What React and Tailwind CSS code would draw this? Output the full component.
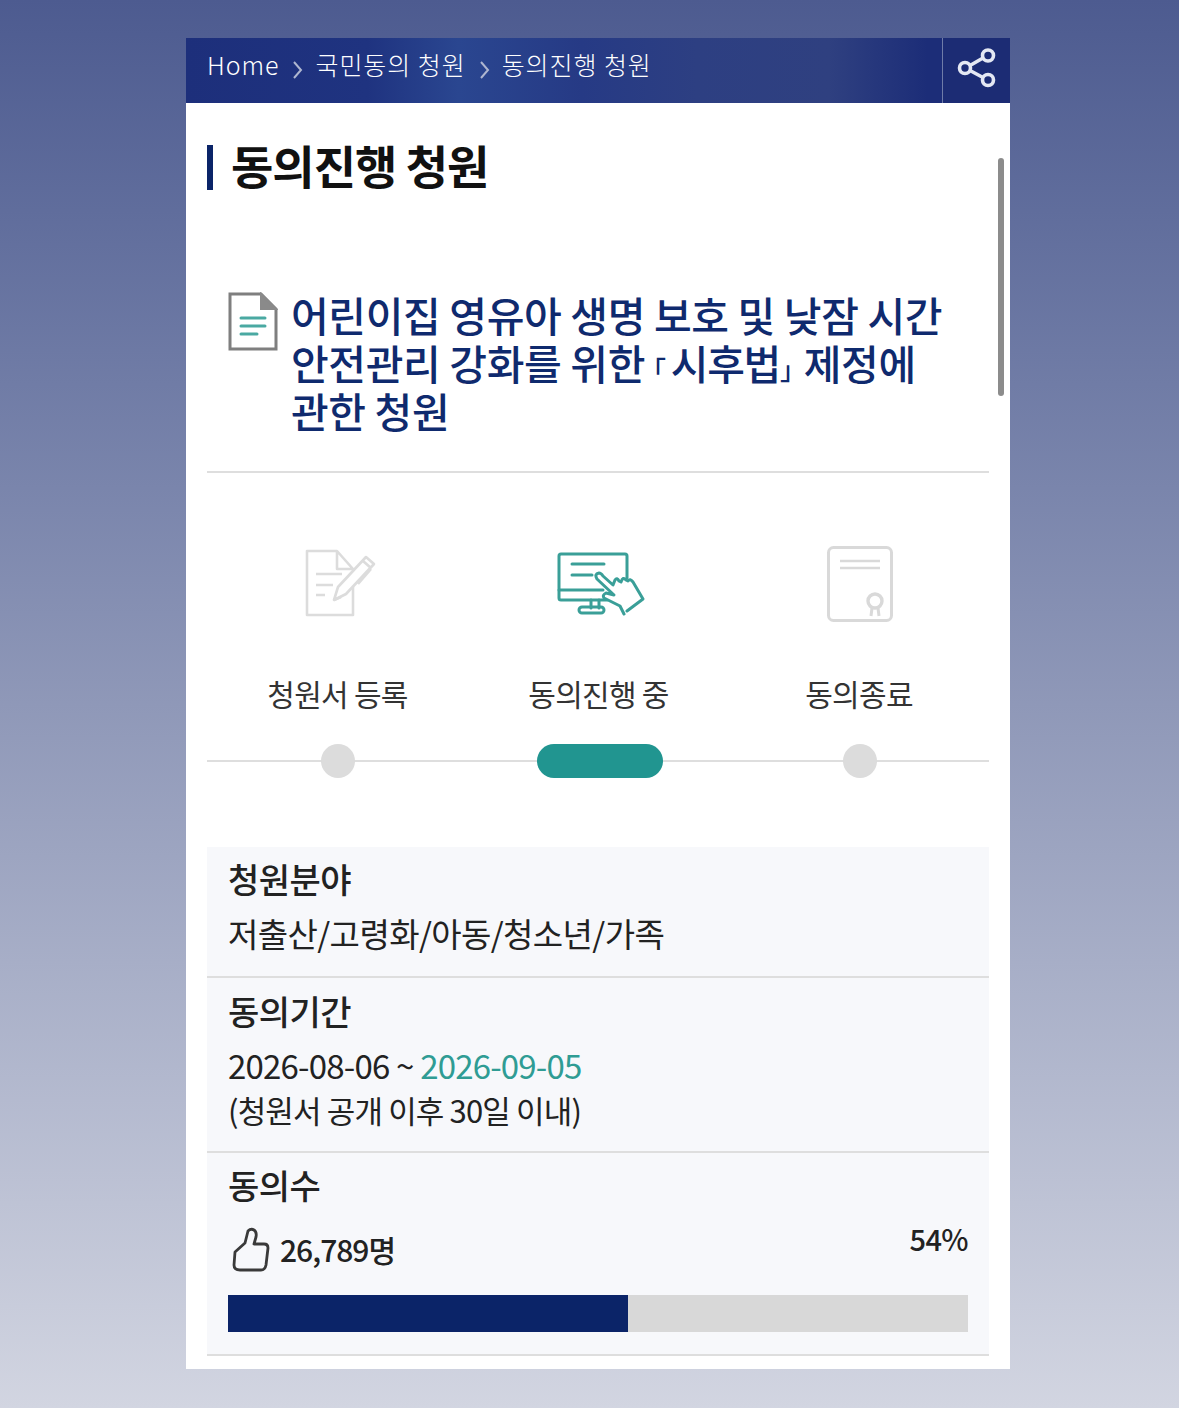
import React from 'react';

const font = { fontFamily: '"Noto Sans CJK KR", "Noto Sans", sans-serif' };

const ChevronSep = () => (
  <svg width="11" height="20" viewBox="0 0 11 20" className="ml-[13px] mr-[12px] mt-[14px] shrink-0" fill="none" stroke="#aeb6d0" strokeWidth="2">
    <path d="M2 2 L9 10 L2 18" />
  </svg>
);

const ShareIcon = () => (
  <svg width="40" height="40" viewBox="0 0 40 40" className="mb-[5px]" fill="none" stroke="#e4e8f3" strokeWidth="3.6">
    <circle cx="8" cy="20" r="5.5" />
    <circle cx="31" cy="7.5" r="5.5" />
    <circle cx="31" cy="32" r="5.5" />
    <path d="M13 17.5 L26 10 M13 22.5 L26 29.5" />
  </svg>
);

const DocIcon = () => (
  <svg width="50" height="60" viewBox="0 0 50 60" fill="none">
    <path d="M2 2 H33 L48 17 V57 H2 Z" fill="#fff" stroke="#7f7f7f" strokeWidth="3" />
    <path d="M33 2 L48 17 H33 Z" fill="#8a8a8a" stroke="#8a8a8a" strokeWidth="2" />
    <path d="M13 26 H37 M13 34 H37 M13 42 H29" stroke="#4aa9a2" strokeWidth="3" strokeLinecap="round" />
  </svg>
);

const WriteIcon = () => (
  <svg width="72" height="70" viewBox="0 0 72 70" fill="none" stroke="#dcdcdc" strokeWidth="2.6">
    <path d="M48 33 V66 H2 V2 H32 L48 20 H32 V2" strokeLinejoin="round" />
    <path d="M11 25 H37 M11 36 H28 M11 46 H20" />
    <path d="M29 51 L33 38 L61 8 L69 15 L41 45 Z" fill="#fff" strokeLinejoin="round" />
    <path d="M58 12 L66 19 M66 20 L53 35 M29 51 L36 48" />
  </svg>
);

const ClickIcon = () => (
  <svg width="88" height="64" viewBox="0 0 88 64" fill="none" stroke="#3a9f98" strokeWidth="3" strokeLinecap="round" strokeLinejoin="round">
    <path d="M50 48 H4 Q2 48 2 46 V4 Q2 2 4 2 H68 Q70 2 70 4 V26" />
    <path d="M2 38 H46" />
    <path d="M15 12 H47 M15 23 H35" />
    <path d="M34 48 V56 M42 48 V56" />
    <rect x="22" y="55" width="25" height="6" rx="3" />
    <path d="M67 62 L63 54 L47 46 Q45 43 49 41 L57 43 L40 27 Q37 22 42 21 Q44 21 46 24 L56 33 L58 28 Q60 25 62 29 L64 30 Q66 24 69 28 L71 29 Q73 26 76 30 L86 47 L70 59" fill="#fff" />
  </svg>
);

const CertIcon = () => (
  <svg width="66" height="76" viewBox="0 0 66 76" fill="none" stroke="#d9d9d9" strokeWidth="3">
    <rect x="1.5" y="1.5" width="63" height="73" rx="5" />
    <path d="M13 15 H53 M13 22 H53" strokeWidth="2.6" />
    <circle cx="48" cy="55" r="7" strokeWidth="3.4" />
    <path d="M45 62 L44 70 M51 62 L52 70" strokeWidth="3" />
  </svg>
);

const ThumbIcon = () => (
  <svg width="40" height="46" viewBox="0 0 40 46" fill="none" stroke="#3a3a3a" strokeWidth="2.8" strokeLinejoin="round" strokeLinecap="round">
    <path d="M4 25 L14 16 Q16 8 17 4 Q20 1 23 3 Q26 5 25 10 L23 17 H33 Q37 17 37 21 L35 38 Q34 43 30 43 H9 Q3 43 3 38 Z" />
  </svg>
);

const steps = [
  { label: '청원서 등록', icon: <WriteIcon />, offset: 'translate-x-[3px]' },
  { label: '동의진행 중', icon: <ClickIcon />, offset: 'translate-x-[2px]' },
  { label: '동의종료', icon: <CertIcon />, offset: 'translate-x-[1px]' },
];

const App = () => {
  return (
    <div className="h-[1408px] w-full pt-[38px] bg-gradient-to-b from-[#4d5b90] via-[#8f98b8] to-[#d2d5e1]" style={font}>
      <div className="relative ml-[186px] flex h-[1331px] w-[824px] flex-col overflow-hidden bg-white">
        {/* breadcrumb */}
        <div className="flex h-[65px] shrink-0 items-stretch justify-between bg-[linear-gradient(90deg,#1d2f7b_0%,#1f3380_22%,#2a4690_33%,#263a85_48%,#2d3f82_62%,#2f4080_78%,#1c2d78_90%)]">
          <div className="flex items-start pl-[21px] pt-[8px] text-[25px] font-light leading-[37px] tracking-[0.95px] text-white">
            <span>Home</span>
            <ChevronSep />
            <span>국민동의 청원</span>
            <ChevronSep />
            <span>동의진행 청원</span>
          </div>
          <div className="flex w-[68px] items-center justify-center border-l border-[#6f7ca8] bg-[#1c2c74]">
            <ShareIcon />
          </div>
        </div>

        {/* scrollbar */}
        <div className="absolute left-[812px] top-[120px] h-[238px] w-[6px] rounded-full bg-[#8c8c8c]" />

        <div className="flex flex-1 flex-col px-[21px]">
          <h1 className="mt-[42px] flex h-[45px] items-center border-l-[6px] border-[#0b2468] pl-[18px] text-[46px] font-bold tracking-[-1px] text-[#111]">
            <span className="mt-[-6px]">동의진행 청원</span>
          </h1>

          <div className="mt-[109px] flex border-b-2 border-[#dedede] pb-[37px] pl-[21px]">
            <div className="mt-[-7px] w-[63px] shrink-0"><DocIcon /></div>
            <h2 className="mt-[-9px] text-[41px] font-medium leading-[48px] tracking-[-0.35px] text-[#0f2a6e]">
              어린이집 영유아 생명 보호 및 낮잠 시간<br />
              안전관리 강화를 위한<span className="ml-[-5px] mr-[5px] text-[26px] leading-none">「</span><span className="tracking-[-1.3px]">시후법</span><span className="mr-[-2px] text-[26px] leading-none">」</span>제정에<br />
              관한 청원
            </h2>
          </div>

          {/* steps */}
          <div className="relative mt-[72px] h-[303px]">
            <div className="grid grid-cols-[261px_261px_260px]">
              {steps.map((step) => (
                <div key={step.label} className="flex flex-col items-center">
                  <div className={`flex h-[78px] items-center justify-center ${step.offset}`}>{step.icon}</div>
                  <span className="mt-[50px] text-[30px] leading-[40px] tracking-[-0.7px] text-[#333]">{step.label}</span>
                </div>
              ))}
            </div>
            <div className="mt-[31px] flex h-[34px] items-center">
              <div className="relative h-[2px] w-full bg-[#dedede]">
                <span className="absolute left-[114px] top-[-16px] h-[34px] w-[34px] rounded-full bg-[#dcdcdc]" />
                <span className="absolute left-[330px] top-[-16px] h-[34px] w-[126px] rounded-full bg-[#219590]" />
                <span className="absolute left-[636px] top-[-16px] h-[34px] w-[34px] rounded-full bg-[#dcdcdc]" />
              </div>
            </div>
          </div>

          {/* info */}
          <div className="mt-[-1px] bg-[#f7f8fb] text-[#222]">
            <div className="h-[131px] border-b-2 border-[#dedede] px-[21px] pt-[10px]">
              <div className="text-[34px] font-medium leading-[44px] tracking-[-0.5px]">청원분야</div>
              <div className="mt-[9px] text-[33px] leading-[46px] tracking-[-0.6px]">저출산/고령화/아동/청소년/가족</div>
            </div>
            <div className="h-[175px] border-b-2 border-[#dedede] px-[21px] pt-[11px]">
              <div className="text-[34px] font-medium leading-[44px] tracking-[-0.5px]">동의기간</div>
              <div className="mt-[9px] text-[33px] leading-[46px] tracking-[-0.8px]">
                2026-08-06 ~ <span className="text-[#2f9c94]">2026-09-05</span>
              </div>
              <div className="mt-[1px] text-[31px] leading-[42px] tracking-[-0.85px]">(청원서 공개 이후 30일 이내)</div>
            </div>
            <div className="h-[203px] border-b-2 border-[#dedede] px-[21px] pt-[10px]">
              <div className="text-[34px] font-medium leading-[44px] tracking-[-0.5px]">동의수</div>
              <div className="mt-[20px] flex items-start justify-between">
                <div className="flex items-center gap-[9px] pl-[3px]">
                  <ThumbIcon />
                  <span className="mt-[-2px] text-[30px] font-medium leading-[44px] tracking-[-1px]">26,789명</span>
                </div>
                <span className="mt-[-7px] text-[29px] font-medium leading-[36px] tracking-[-0.6px]">54%</span>
              </div>
              <div className="mt-[22px] h-[37px] w-full bg-[#d8d8d8]">
                <div className="h-full bg-[#0b2468]" style={{ width: '54%' }} />
              </div>
            </div>
          </div>
        </div>
      </div>
    </div>
  );
};

export default App;
